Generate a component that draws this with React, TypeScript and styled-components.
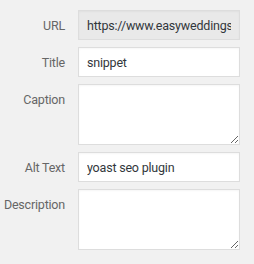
import React from "react";
import styled, {createGlobalStyle} from "styled-components";

const GlobalStyle = createGlobalStyle`
  html, body {
    margin: 0;
    padding: 0;
    background: #f1f1f1;
  }
`;

const Form = styled.div`
  display: grid;
  grid-template-columns: 65px 162px;
  column-gap: 13px;
  row-gap: 7px;
  padding: 10px 0 0 0;
  font-family: Roboto, "Noto Sans", sans-serif;
  font-size: 12.5px;
  letter-spacing: -0.2px;
`;

const Label = styled.label`
  color: #666;
  text-align: right;
  white-space: nowrap;
  line-height: 18px;
  padding-top: 7px;
`;

const Input = styled.input<{ $readOnly?: boolean }>`
  box-sizing: border-box;
  width: 162px;
  height: 30px;
  margin: 0;
  padding: 0 8px;
  border: 1px solid #ddd;
  border-radius: 0;
  background: ${p => (p.$readOnly ? "#e9e9e9" : "#fff")};
  color: #32373c;
  font: inherit;
  letter-spacing: inherit;
  outline: none;
  box-shadow: inset 0 1px 2px rgba(0, 0, 0, 0.04);
`;

const TextArea = styled.textarea`
  box-sizing: border-box;
  display: block;
  width: 162px;
  height: 61px;
  margin: 0;
  padding: 6px 8px;
  border: 1px solid #ddd;
  border-radius: 0;
  background: #fff;
  color: #32373c;
  font: inherit;
  outline: none;
  resize: vertical;
  box-shadow: inset 0 1px 2px rgba(0, 0, 0, 0.04);
`;

const App: React.FC = () => {
    return (
        <>
            <GlobalStyle/>
            <Form>
                <Label>URL</Label>
                <Input $readOnly readOnly defaultValue="https://www.easyweddings.com.au/articles/yoast-seo"/>
                <Label>Title</Label>
                <Input defaultValue="snippet"/>
                <Label>Caption</Label>
                <TextArea/>
                <Label>Alt Text</Label>
                <Input defaultValue="yoast seo plugin"/>
                <Label>Description</Label>
                <TextArea/>
            </Form>
        </>
    );
};

export default App;
